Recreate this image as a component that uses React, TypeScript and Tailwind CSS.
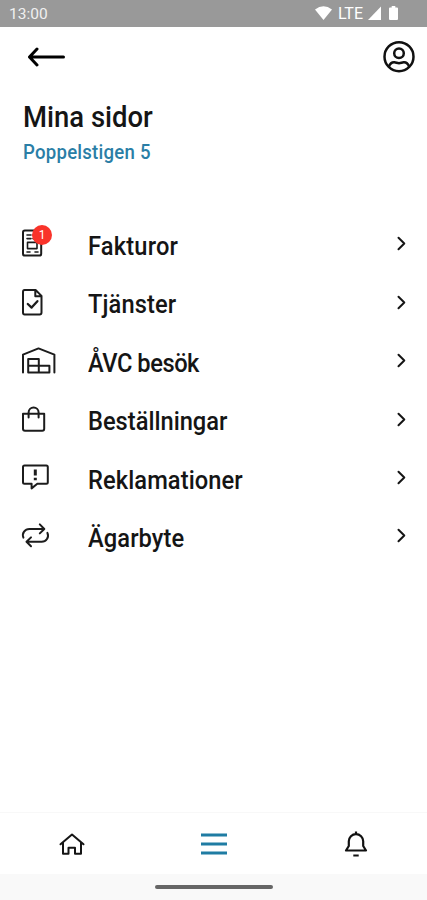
import type { ReactNode } from 'react';

const InvoiceIcon = () => (
  <>
    <rect x="3" y="3.6" width="18.2" height="25" rx="1.8" />
    <path d="M7 8h4M13 8h3M7 11.6h4M13 11.6h3M7.5 15.4v6.2H17v-6.2zM7 25h3M15 25h3" strokeWidth="1.6" />
  </>
);

const FileCheckIcon = () => (
  <>
    <path d="M4.6 4h11l5.9 5.9v16.6q0 1.9-1.9 1.9h-15Q3 28.4 3 26.5V5.9Q3 4 4.6 4zM15.3 4v6.2h6" />
    <path d="M7.8 18l3.8 3.6 5.8-6.4" strokeWidth="2.3" />
  </>
);

const WarehouseIcon = () => (
  <path d="M3 28.4V10.6L18.5 4.4l15.9 6.2v17.8M8.2 15h10.6v6.8H8.2zM8.2 21.8h21.2v6.6H8.2zM18.8 21.8v6.6" />
);

const BagIcon = () => (
  <path d="M3 10.8h21.2v15q0 2-2 2H5q-2 0-2-2zM8.6 14.4V9.6a5 5 0 0 1 10 0v4.8" />
);

const ComplaintIcon = () => (
  <>
    <path d="M4.5 4.6h21.8q1.5 0 1.5 1.5v15.2q0 1.5-1.5 1.5h-9l-5.7 4.6v-4.6H4.5Q3 22.8 3 21.3V6.1q0-1.5 1.5-1.5z" />
    <path d="M15.3 8.6v5.8M15.3 16.8v2.4" strokeWidth="3" strokeLinecap="butt" />
  </>
);

const SwapIcon = () => (
  <path d="M3.4 18.6C1.6 14.2 5 10 9.4 10h14.4M19.8 5.4l4.5 4.6-4.5 4.4M27.4 13.8c2 4.4-1.2 9-5.8 9h-15M11 18.4l-4.5 4.4 4.5 4.5" />
);

const menuItems: { title: string; icon: ReactNode; badge?: number; tracking: string }[] = [
  { title: 'Fakturor', icon: <InvoiceIcon />, badge: 1, tracking: 'tracking-[0.2px]' },
  { title: 'Tjänster', icon: <FileCheckIcon />, tracking: 'tracking-[0.1px]' },
  { title: 'ÅVC besök', icon: <WarehouseIcon />, tracking: 'tracking-[-0.5px]' },
  { title: 'Beställningar', icon: <BagIcon />, tracking: 'tracking-normal' },
  { title: 'Reklamationer', icon: <ComplaintIcon />, tracking: 'tracking-[0.1px]' },
  { title: 'Ägarbyte', icon: <SwapIcon />, tracking: 'tracking-[0.1px]' },
];

const StatusBar = () => (
  <div className="flex h-[26.5px] shrink-0 items-center justify-between bg-[#999999] pl-[9px] pr-[29px] text-white">
    <span className="pt-[3px] text-[15.5px] leading-none text-[#f0f0f0]">13:00</span>
    <div className="flex items-center">
      <svg className="h-[14px] w-[17px]" viewBox="0 0 17 14" fill="currentColor">
        <path d="M0 3.6Q8.5-3 17 3.6L8.5 14z" />
      </svg>
      <span className="ml-[6px] pt-[1px] text-[16px] leading-none">LTE</span>
      <svg className="ml-[5px] h-[14px] w-[13px]" viewBox="0 0 13 14" fill="currentColor">
        <path d="M13 .5V14H0z" />
      </svg>
      <svg className="ml-[8px] h-[14px] w-[9px]" viewBox="0 0 9 14" fill="currentColor">
        <path d="M2.7 0h3.6v1.5H8q1 0 1 1V13q0 1-1 1H1q-1 0-1-1V2.5q0-1 1-1h1.7z" />
      </svg>
    </div>
  </div>
);

const Header = () => (
  <header className="flex h-[60px] shrink-0 items-center justify-between pl-[27px] pr-[12px]">
    <svg className="h-[20px] w-[39px]" viewBox="0 0 39 20" fill="none" stroke="black" strokeWidth="3" strokeLinecap="round" strokeLinejoin="round">
      <path d="M36.5 10h-34M10 2l-7.5 8 7.5 8" />
    </svg>
    <svg className="h-[33px] w-[33px]" viewBox="0 0 33 33" fill="none" stroke="#111" strokeWidth="2.5">
      <circle cx="17" cy="16.7" r="14.5" />
      <circle cx="17" cy="13.2" r="4.8" />
      <path d="M6.8 26.8c1.2-3.2 3-4.7 5.6-4.5 1.9.2 2.8.9 4.6.9s2.7-.7 4.6-.9c2.6-.2 4.4 1.3 5.6 4.5" />
    </svg>
  </header>
);

const BottomNav = () => (
  <nav className="grid h-[62px] shrink-0 grid-cols-3 place-items-center border-t border-[#f8f8f8] pl-[1px]">
    <svg className="h-[24px] w-[28px]" viewBox="0 0 28 24" fill="none" stroke="#151515" strokeWidth="2" strokeLinejoin="round" strokeLinecap="round">
      <path d="M2.5 12.3L14 2.5l11.5 9.8M5 10.8v11h5.5v-6H17v6h6v-11" />
    </svg>
    <svg className="h-[22px] w-[28px]" viewBox="0 0 28 22" fill="none" stroke="#1f7ca3" strokeWidth="2.8">
      <path d="M1 2h26M1 11h26M1 20h26" />
    </svg>
    <svg className="h-[28px] w-[24px]" viewBox="0 0 24 28" fill="none" stroke="#111" strokeWidth="2.2" strokeLinejoin="round">
      <path d="M2 20.5h20L19.200 16v-4.700a7.200 7.200 0 0 0-14.400 0V16zM12 4V1.500M9.300 25.500h5.400" />
    </svg>
  </nav>
);

export default function App() {
  return (
    <div className="flex h-[900px] w-[427px] flex-col overflow-hidden bg-white font-['Roboto',sans-serif] text-[#151515]">
      <StatusBar />
      <Header />

      <div className="flex h-[127.8px] shrink-0 flex-col items-start pl-[23px] pt-[12px]">
        <h1 className="origin-left scale-x-[0.915] whitespace-nowrap text-[30px] font-medium leading-[36px]">Mina sidor</h1>
        <p className="mt-[5px] origin-left scale-x-[0.93] whitespace-nowrap text-[20px] font-medium leading-[24px] tracking-[0.25px] text-[#2a7ea6]">
          Poppelstigen 5
        </p>
      </div>

      <ul className="shrink-0">
        {menuItems.map((item) => (
          <li key={item.title} className="flex h-[58.4px] items-center pl-[20px] pr-[21px]">
            <div className="relative h-[32px] w-[68px] shrink-0">
              <svg className="h-[32px] w-[36px]" viewBox="0 0 36 32" fill="none" stroke="#1c1c1c" strokeWidth="2" strokeLinejoin="round" strokeLinecap="round">
                {item.icon}
              </svg>
              {item.badge && (
                <span className="absolute left-[12px] top-[-2px] flex h-[20px] w-[20px] items-center justify-center rounded-full bg-[#f9332a] text-[12px] text-white">
                  {item.badge}
                </span>
              )}
            </div>
            <div className="flex-1 pt-[5px]">
              <span
                className={`block w-max origin-left scale-x-[0.91] whitespace-nowrap text-[26px] font-medium leading-[32px] ${item.tracking}`}
              >
                {item.title}
              </span>
            </div>
            <svg className="h-[16px] w-[10px]" viewBox="0 0 10 16" fill="none" stroke="#151515" strokeWidth="2" strokeLinecap="round" strokeLinejoin="round">
              <path d="M2.5 2.8l5.8 5.7-5.8 5.7" />
            </svg>
          </li>
        ))}
      </ul>

      <div className="flex-1" />
      <BottomNav />
      <div className="flex h-[26px] shrink-0 items-center justify-center bg-[#f9f9f9]">
        <div className="h-[4px] w-[118px] rounded-full bg-[#666666]" />
      </div>
    </div>
  );
}
